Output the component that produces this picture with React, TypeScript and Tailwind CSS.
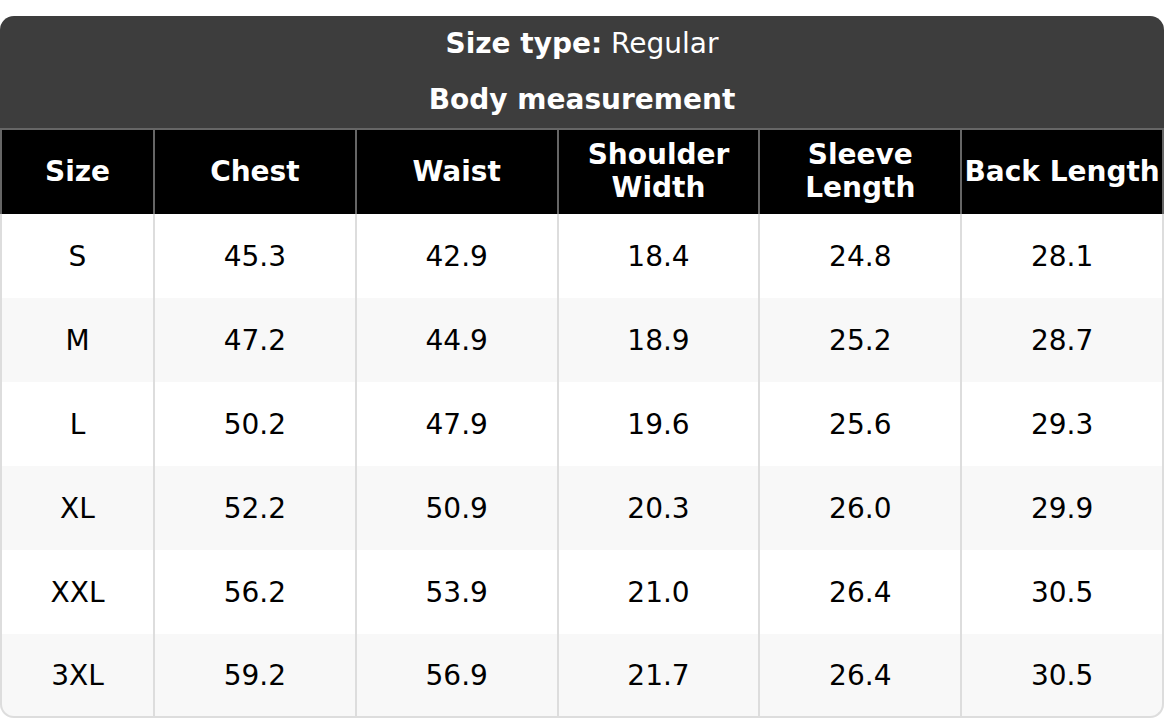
const columns = ["Size", "Chest", "Waist", "Shoulder Width", "Sleeve Length", "Back Length"];

const rows = [
  ["S", "45.3", "42.9", "18.4", "24.8", "28.1"],
  ["M", "47.2", "44.9", "18.9", "25.2", "28.7"],
  ["L", "50.2", "47.9", "19.6", "25.6", "29.3"],
  ["XL", "52.2", "50.9", "20.3", "26.0", "29.9"],
  ["XXL", "56.2", "53.9", "21.0", "26.4", "30.5"],
  ["3XL", "59.2", "56.9", "21.7", "26.4", "30.5"],
];

const App = () => {
  return (
    <div className="min-h-screen bg-white pt-4 font-['DejaVu_Sans',sans-serif] text-[28px] leading-[1.17]">
      <div className="rounded-t-[14px] overflow-hidden">
        {/* Title block */}
        <div className="bg-[#3d3d3d] text-white text-center border-b-2 border-[#666]">
          <div className="h-[56px] flex items-center justify-center">
            <span className="font-bold">Size type:</span>
            <span>&nbsp;Regular</span>
          </div>
          <div className="h-[56px] flex items-center justify-center font-bold">Body measurement</div>
        </div>

        <table className="w-full table-fixed border-separate border-spacing-0">
          <colgroup>
            <col className="w-[155px]" />
            <col />
            <col />
            <col />
            <col />
            <col />
          </colgroup>
          <thead>
            <tr>
              {columns.map((col, i) => (
                <th
                  key={col}
                  className={`h-[84px] bg-black text-white font-bold text-center px-0 border-r-2 border-[#666] ${
                    i === 0 ? "border-l-2" : ""
                  } ${i === columns.length - 1 ? "whitespace-nowrap" : ""}`}
                >
                  {col}
                </th>
              ))}
            </tr>
          </thead>
          <tbody>
            {rows.map((row, r) => {
              const last = r === rows.length - 1;
              return (
                <tr key={row[0]} className={r % 2 === 1 ? "bg-[#f8f8f8]" : "bg-white"}>
                  {row.map((cell, i) => (
                    <td
                      key={i}
                      className={`h-[84px] pt-[2px] text-center text-black px-1 border-r-2 border-[#ddd] ${
                        i === 0 ? "border-l-2" : ""
                      } ${last ? "border-b-2" : ""} ${last && i === 0 ? "rounded-bl-[14px]" : ""} ${
                        last && i === row.length - 1 ? "rounded-br-[14px]" : ""
                      }`}
                    >
                      {cell}
                    </td>
                  ))}
                </tr>
              );
            })}
          </tbody>
        </table>
      </div>
    </div>
  );
};

export default App;
